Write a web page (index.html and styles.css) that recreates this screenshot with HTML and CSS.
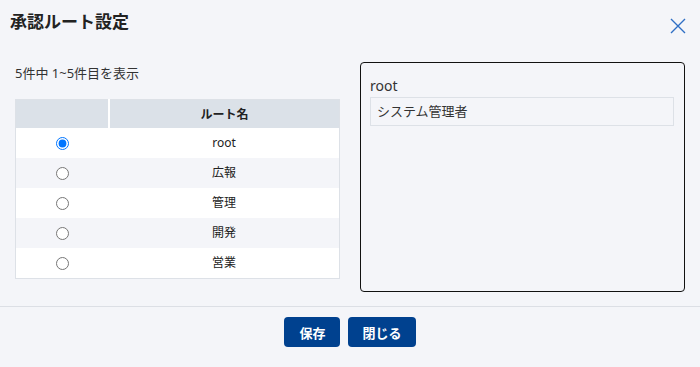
FILE: index.html
```html
<!DOCTYPE html>
<html lang="ja">
<head>
<meta charset="utf-8">
<link rel="stylesheet" href="styles.css">
</head>
<body>
<div class="dialog">
  <div class="header">
    <h1 class="title">承認ルート設定</h1>
    <button class="close" aria-label="close">
      <svg width="16" height="16" viewBox="0 0 16 16"><path d="M1 1L15 15M15 1L1 15" stroke="#2f6fc4" stroke-width="1.4" fill="none"/></svg>
    </button>
  </div>
  <div class="content">
    <div class="left">
      <div class="summary">5件中 1~5件目を表示</div>
      <table class="grid">
        <thead>
          <tr><th class="c1"></th><th>ルート名</th></tr>
        </thead>
        <tbody>
          <tr><td class="c1"><input type="radio" name="r" checked></td><td>root</td></tr>
          <tr><td class="c1"><input type="radio" name="r"></td><td>広報</td></tr>
          <tr><td class="c1"><input type="radio" name="r"></td><td>管理</td></tr>
          <tr><td class="c1"><input type="radio" name="r"></td><td>開発</td></tr>
          <tr><td class="c1"><input type="radio" name="r"></td><td>営業</td></tr>
        </tbody>
      </table>
    </div>
    <div class="panel">
      <div class="label">root</div>
      <div class="field">システム管理者</div>
    </div>
  </div>
  <div class="footer">
    <button class="btn">保存</button>
    <button class="btn">閉じる</button>
  </div>
</div>
</body>
</html>
```

FILE: styles.css
```css
html, body {
  margin: 0;
  padding: 0;
  background: #f4f5f9;
  font-family: "Noto Sans", "Noto Sans CJK JP", sans-serif;
  color: #333;
}
.dialog {
  width: 700px;
  height: 367px;
  display: flex;
  flex-direction: column;
}
.header {
  height: 44px;
  display: flex;
  align-items: center;
  justify-content: space-between;
  padding: 0 14px 0 10px;
}
.title {
  margin: 0;
  font-size: 17px;
  font-weight: 700;
  color: #222;
  line-height: 44px;
}
.close {
  border: 0;
  background: none;
  padding: 0;
  width: 16px;
  height: 16px;
  display: flex;
  margin-top: 8px;
}
.content {
  display: flex;
  gap: 20px;
  padding: 18px 15px 14px 15px;
}
.left {
  width: 325px;
}
.summary {
  font-size: 13px;
  line-height: 20px;
  margin-top: 1px;
  color: #333;
}
.grid {
  margin-top: 16px;
  width: 325px;
  border-collapse: collapse;
  border: 1px solid #dde1e7;
  font-size: 12px;
  color: #222;
}
.grid th {
  height: 28px;
  padding: 0;
  background: #dbe1e8;
  font-weight: 700;
  border-left: 2px solid #fff;
}
.grid th.c1 {
  border-left: 0;
}
.grid td {
  height: 30px;
  padding: 0;
  text-align: center;
  line-height: 16px;
}
.grid .c1 {
  width: 92px;
}
.grid tbody tr:nth-child(odd) {
  background: #fff;
}
.grid tbody tr:nth-child(even) {
  background: #f4f5f9;
}
.grid input {
  margin: 0;
  width: 13px;
  height: 13px;
  vertical-align: middle;
}
.panel {
  width: 325px;
  height: 230px;
  box-sizing: border-box;
  border: 1px solid #111;
  border-radius: 4px;
  padding: 13px 10px 0 9px;
}
.label {
  font-size: 14px;
  line-height: 20px;
  color: #333;
}
.field {
  margin-top: 1px;
  height: 29px;
  box-sizing: border-box;
  border: 1px solid #dde1e7;
  padding: 0 6px;
  font-size: 13px;
  line-height: 27px;
  color: #333;
}
.footer {
  border-top: 1px solid #dcdfe5;
  display: flex;
  justify-content: center;
  gap: 8px;
  padding-top: 10px;
}
.btn {
  height: 30px;
  min-width: 56px;
  padding: 0 14px;
  border: 0;
  border-radius: 4px;
  background: #00418f;
  color: #fff;
  font-family: "Noto Sans", "Noto Sans CJK JP", sans-serif;
  font-size: 13px;
  font-weight: 700;
}
```
